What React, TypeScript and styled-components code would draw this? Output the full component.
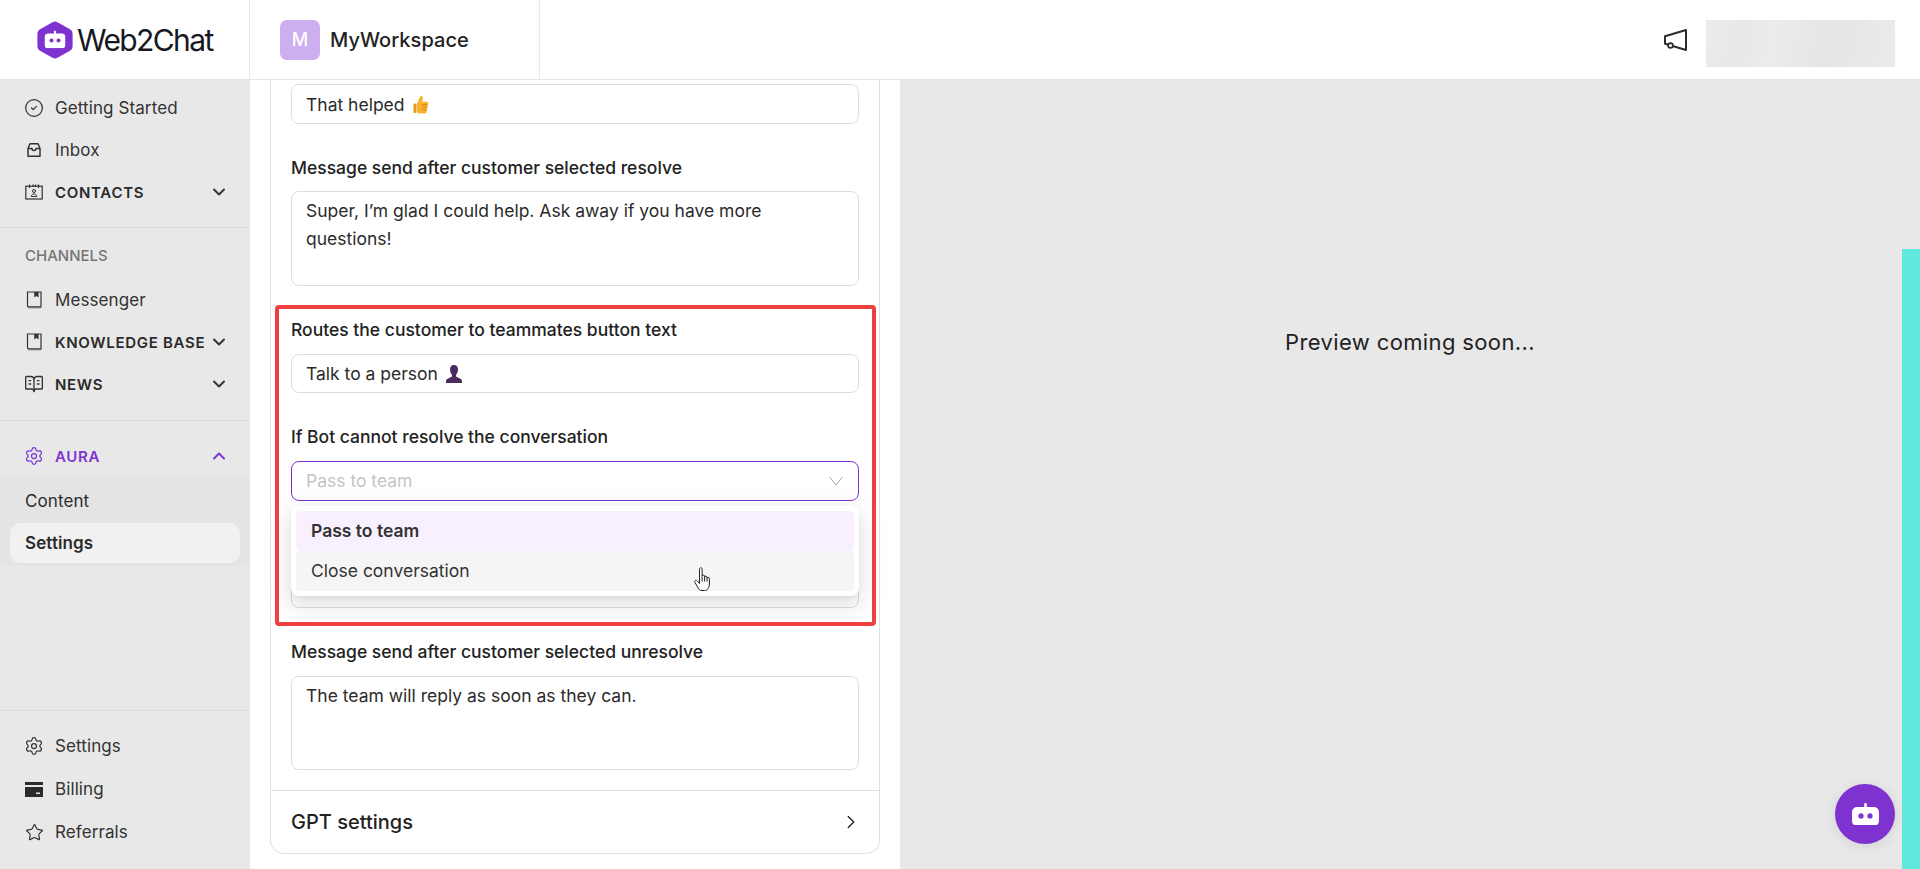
import React from "react";
import styled, { createGlobalStyle } from "styled-components";
import { ChevronDown, ChevronUp, ChevronRight, CircleCheck, Settings as Gear, Star, BookOpenText } from "lucide-react";

const Global = createGlobalStyle`
  html, body { margin: 0; padding: 0; height: 100%; overflow: hidden; }
  body { font-family: Inter, "Liberation Sans", sans-serif; color: #2b2b2b; background: #fff; }
  * { box-sizing: border-box; }
`;

const Page = styled.div`display: flex; flex-direction: column; height: 100vh; overflow: hidden;`;
const Header = styled.header`display: flex; align-items: stretch; height: 80px; flex: none; background: #fff; border-bottom: 1px solid #e6e6e6;`;
const LogoCell = styled.div`width: 250px; flex: none; display: flex; align-items: center; gap: 4px; padding-left: 37px; border-right: 1px solid #e8e8e8;`;
const LogoText = styled.span`font-size: 30px; font-weight: 400; letter-spacing: -1.6px; color: #17171f;`;
const WorkspaceCell = styled.div`width: 290px; flex: none; display: flex; align-items: center; gap: 10px; padding-left: 30px; border-right: 1px solid #e8e8e8;`;
const Avatar = styled.div`width: 40px; height: 40px; border-radius: 7px; background: #cdaeee; color: #fff; display: flex; align-items: center; justify-content: center; font-size: 18px; font-weight: 500;`;
const WorkspaceName = styled.span`font-size: 20px; font-weight: 500; letter-spacing: 0.05px; color: #222;`;
const HeaderRight = styled.div`margin-left: auto; display: flex; align-items: center; gap: 19px; padding-right: 25px;`;
const BlurredUser = styled.div`width: 189px; height: 47px; margin-top: 7px; background: linear-gradient(100deg, #ebebeb 0%, #e8e8e8 20%, #ececec 35%, #e5e5e5 65%, #ebebeb 100%);`;

const Body = styled.div`flex: 1; display: flex; min-height: 0;`;
const Sidebar = styled.nav`width: 250px; flex: none; display: flex; flex-direction: column; background: #e8e8e8;`;
const NavGroup = styled.div<{ $pad: string; $border?: boolean }>`
  padding: ${p => p.$pad};
  ${p => p.$border ? "border-bottom: 1px solid #dcdcdc;" : ""}
`;
const NavRow = styled.div<{ $active?: boolean }>`
  height: 42px; display: flex; align-items: center; padding: 0 21px 0 25px;
  font-size: 17px; letter-spacing: 0.1px; color: ${p => p.$active ? "#7e33d0" : "#333"};
`;
const NavIcon = styled.span`width: 18px; height: 18px; flex: none; margin-right: 12px; display: flex; align-items: center; justify-content: center; svg { display: block; flex: none; }`;
const NavCaps = styled.span<{ $active?: boolean }>`
  font-size: 15px; font-weight: 600; letter-spacing: 0.7px; white-space: nowrap; color: ${p => p.$active ? "#7e33d0" : "#2b2b2b"};
`;
const Chevron = styled.span`margin-left: auto; display: flex;`;
const GroupTitle = styled.div`height: 24px; margin: 0 0 11px; padding-left: 25px; line-height: 24px; font-size: 15px; font-weight: 500; color: #757575;`;
const SubMenu = styled.div`height: 88px; margin-top: 1px; padding: 3px 10px 0; background: #e4e4e4;`;
const SubItem = styled.div<{ $active?: boolean }>`
  height: 40px; margin-bottom: 2px; display: flex; align-items: center; padding-left: 15px; border-radius: 10px;
  font-size: 17px; letter-spacing: 0.1px; font-weight: ${p => p.$active ? 600 : 400};
  background: ${p => p.$active ? "#f1f1f1" : "transparent"}; color: #2b2b2b;
`;
const NavBottom = styled.div`margin-top: auto; display: flex; flex-direction: column; gap: 1px; padding: 14px 0 16px; border-top: 1px solid #dcdcdc;`;

const Main = styled.main`width: 650px; flex: none; padding: 0 20px 15px; background: #fff; overflow: hidden;`;
const Card = styled.section`width: 610px; height: 100%; display: flex; flex-direction: column; padding-top: 4px; background: #fff; border: 1px solid #e0e0e0; border-top: none; border-radius: 0 0 14px 14px;`;
const Form = styled.div`flex: 1; display: flex; flex-direction: column; gap: 32px; padding: 0 20px;`;
const Field = styled.div<{ $gap?: number }>`display: flex; flex-direction: column; gap: ${p => p.$gap ?? 12}px;`;
const Label = styled.div`height: 24px; line-height: 24px; font-size: 17.5px; font-weight: 500; color: #222;`;
const TextBox = styled.div<{ $h?: number }>`height: ${p => p.$h ?? 39}px; display: flex; align-items: center; gap: 8px; padding: 0 14px; border: 1px solid #dcdcdc; border-radius: 8px; background: #fff; font-size: 17.5px; color: #2b2b2b;`;
const TextArea = styled.div<{ $h: number }>`height: ${p => p.$h}px; padding: 5px 14px; border: 1px solid #dcdcdc; border-radius: 8px; font-size: 17.5px; line-height: 28px; color: #2b2b2b;`;
const SelectWrap = styled.div`position: relative;`;
const SelectBox = styled.div`height: 40px; display: flex; align-items: center; justify-content: space-between; padding: 0 15px 1px 14px; border: 1px solid #7e33d0; border-radius: 8px; font-size: 17.5px; color: #c4c4c4; background: #fff;`;
const Menu = styled.div`position: absolute; z-index: 2; left: 0; right: 0; top: 45px; height: 90px; padding: 5px; background: #fff; border-radius: 8px; box-shadow: 0 6px 16px rgba(0,0,0,.08), 0 3px 6px -4px rgba(0,0,0,.12), 0 9px 28px 8px rgba(0,0,0,.05);`;
const MenuItem = styled.div<{ $selected?: boolean }>`
  height: 40px; display: flex; align-items: center; padding: 0 0 1px 15px; border-radius: 4px; font-size: 17.5px; color: #333;
  font-weight: ${p => p.$selected ? 600 : 400}; background: ${p => p.$selected ? "#f9f0ff" : "#f5f5f5"};
`;
const Highlight = styled.div`position: relative; display: flex; flex-direction: column; gap: 32px;`;
const RedFrame = styled.div`position: absolute; z-index: 3; left: -16px; right: -17px; top: -13px; bottom: -18px; border: 4px solid #ef4040; border-radius: 4px; pointer-events: none;`;
const Cursor = styled.svg`position: absolute; z-index: 4; left: 403px; top: 106px;`;
const Collapse = styled.div`flex: none; height: 63px; display: flex; align-items: center; justify-content: space-between; padding: 0 17px 1px 20px; border-top: 1px solid #e0e0e0; font-size: 20px; font-weight: 500; color: #222;`;

const Preview = styled.aside`position: relative; flex: 1; background: #e8e8e8; display: flex; justify-content: center; padding-top: 247px;`;
const PreviewText = styled.div`font-size: 22px; line-height: 30px; height: 30px; color: #222; letter-spacing: 0.37px;`;
const TealBar = styled.div`position: absolute; right: 0; top: 169px; bottom: 0; width: 18px; background: #5fe8dc;`;
const ChatBubble = styled.div`position: absolute; right: 25px; bottom: 25px; width: 60px; height: 60px; border-radius: 50%; background: #7e33d0; display: flex; align-items: center; justify-content: center; box-shadow: 0 2px 12px rgba(0,0,0,.1);`;

const Bot = ({ w, dot }: { w: number; dot: string }) => (
  <svg width={w} height={w * 0.85} viewBox="0 0 27 23" fill="none">
    <rect x="12.2" y="0" width="2.6" height="6" rx="1.3" fill="#fff" />
    <rect x="0" y="4" width="27" height="19" rx="5" fill="#fff" />
    <circle cx="9" cy="13" r="2.6" fill={dot} />
    <circle cx="18" cy="13" r="2.6" fill={dot} />
  </svg>
);

const LogoMark = () => (
  <svg width="36" height="38" viewBox="0 0 36 38" fill="none">
    <path d="M15.500 1.200a5 5 0 0 1 5 0l12.500 7a5 5 0 0 1 2.600 4.400v12.800a5 5 0 0 1-2.600 4.400l-12.500 7a5 5 0 0 1-5 0L3 29.800a5 5 0 0 1-2.600-4.400V12.600A5 5 0 0 1 3 8.200z" fill="#7e33d0" />
    <g transform="translate(7.500 9.500)"><Bot w={21} dot="#7e33d0" /></g>
  </svg>
);

const InboxIcon = () => (
  <svg width="18" height="18" viewBox="0 0 18 18" fill="none" stroke="#333" strokeWidth="1.5" strokeLinejoin="round">
    <path d="M3 7.500 5 2.800h8l2 4.700v7.700H3z" /><path d="M3 7.500h4a2 2 0 0 0 4 0h4" />
  </svg>
);
const ContactsIcon = () => (
  <svg width="18" height="18" viewBox="0 0 18 18" fill="none" stroke="#333" strokeWidth="1.2">
    <rect x="0.800" y="3.200" width="16.400" height="12.800" /><path d="M4.500 1.500v3.500M13.500 1.500v3.500M8 1.500v2.500M10.500 1.500v2.500" />
    <circle cx="9" cy="8" r="1.500" strokeWidth="1" /><path d="M6.200 13.500c.3-1.700 1.400-2.600 2.800-2.600s2.500.9 2.800 2.600z" strokeWidth="1" />
  </svg>
);
const BookIcon = () => (
  <svg width="18" height="18" viewBox="0 0 18 18" fill="none" stroke="#333" strokeWidth="1.200">
    <path d="M2.500 1h13.500v14.800H3.300a.8.800 0 0 1-.8-.8z" /><path d="M3 16.800h13" strokeWidth="0.800" stroke="#666" />
    <path d="M9.500 1v5l1.900-1.200L13.300 6V1" fill="#333" strokeWidth="0.500" />
  </svg>
);
const CardIcon = () => (
  <svg width="18" height="15" viewBox="0 0 18 15">
    <path d="M0 0h18v3H0zM0 5h18v10H0z" fill="#2b2b2b" /><rect x="11" y="10.500" width="4" height="1.500" fill="#e8e8e8" />
  </svg>
);
const Megaphone = () => (
  <svg width="24" height="24" viewBox="0 0 24 24" fill="none" stroke="#2b2b2b" strokeWidth="2" strokeLinejoin="round">
    <path d="M2 8.200 23 2v20L2 15.800z" /><circle cx="7.500" cy="17.500" r="2.400" fill="#fff" strokeWidth="1.600" />
  </svg>
);
const ThumbsUp = () => (
  <svg width="16" height="19" viewBox="0 0 16 19">
    <path d="M4 8.500 7.500 1c1.600-.5 2.500.6 2.300 2L9.300 6.800h4.500c1.600 0 1.900 1.300 1.500 2.300l-1.700 7.700c-.3 1-1 1.700-2 1.700H6c-1.300 0-2-.8-2-2z" fill="#f7b32b" />
    <rect x="0.500" y="8.500" width="3" height="9.500" rx="1.200" fill="#e89a1c" />
    <path d="M9 9.500h5M9 12h4.500M9 14.500h4" stroke="#d9861a" strokeWidth="1" />
  </svg>
);
const Person = () => (
  <svg width="16" height="18" viewBox="0 0 16 18">
    <path d="M8 0c2.600 0 4 2 4 4.500S10.800 9 10 10v1.500l4.800 2.500c.8.500 1.200 1.200 1.200 2.200V18H0v-1.800c0-1 .4-1.700 1.200-2.200L6 11.500V10C5.200 9 4 7 4 4.500S5.400 0 8 0z" fill="#4b2a5e" />
  </svg>
);
const SelectChevron = () => (
  <svg width="14" height="10" viewBox="0 0 14 10" fill="none" stroke="#a8a8a8" strokeWidth="1">
    <path d="M.500 .800 7 9.200 13.500 .800" />
  </svg>
);
const HandCursor = () => (
  <Cursor width="18" height="25" viewBox="0 0 18 25" fill="#fff" stroke="#222" strokeWidth="1">
    <path d="M5.500 2.200c0-2 2.600-2 2.600 0v7c.1-1.500 2.500-1.500 2.500 0v1c.1-1.400 2.400-1.400 2.400.1v1c.2-1.300 2.400-1.200 2.400.3v5.400c0 3-1.700 6.500-4.700 6.500H8c-2.100 0-3.100-1.100-4-2.700L1 15.500c-1-1.700 1.100-3 2.300-1.500l2.200 2.500z" />
    <path d="M8.100 9.500v5M10.600 10v4.500M13 11v3.500" />
  </Cursor>
);

type Item = { icon: React.ReactNode; text: string };

const Plain = ({ icon, text }: Item) => (
  <NavRow><NavIcon>{icon}</NavIcon>{text}</NavRow>
);
const Section = ({ icon, text, open }: Item & { open?: boolean }) => (
  <NavRow $active={open}>
    <NavIcon>{icon}</NavIcon>
    <NavCaps $active={open}>{text}</NavCaps>
    <Chevron>{open ? <ChevronUp size={20} strokeWidth={2.4} /> : <ChevronDown size={20} strokeWidth={2.4} />}</Chevron>
  </NavRow>
);

export default function App() {
  return (
    <Page>
      <Global />
      <Header>
        <LogoCell><LogoMark /><LogoText>Web2Chat</LogoText></LogoCell>
        <WorkspaceCell><Avatar>M</Avatar><WorkspaceName>MyWorkspace</WorkspaceName></WorkspaceCell>
        <HeaderRight><Megaphone /><BlurredUser /></HeaderRight>
      </Header>
      <Body>
        <Sidebar>
          <NavGroup $pad="7px 0 14px" $border>
            <Plain icon={<CircleCheck size={20} strokeWidth={1.5} />} text="Getting Started" />
            <Plain icon={<InboxIcon />} text="Inbox" />
            <Section icon={<ContactsIcon />} text="CONTACTS" />
          </NavGroup>
          <NavGroup $pad="16px 0 15px" $border>
            <GroupTitle>CHANNELS</GroupTitle>
            <Plain icon={<BookIcon />} text="Messenger" />
            <Section icon={<BookIcon />} text="KNOWLEDGE BASE" />
            <Section icon={<BookOpenText size={20} strokeWidth={1.6} />} text="NEWS" />
          </NavGroup>
          <NavGroup $pad="14px 0 0">
            <Section icon={<Gear size={20} strokeWidth={1.5} />} text="AURA" open />
            <SubMenu>
              <SubItem>Content</SubItem>
              <SubItem $active>Settings</SubItem>
            </SubMenu>
          </NavGroup>
          <NavBottom>
            <Plain icon={<Gear size={20} strokeWidth={1.5} />} text="Settings" />
            <Plain icon={<CardIcon />} text="Billing" />
            <Plain icon={<Star size={19} strokeWidth={1.5} />} text="Referrals" />
          </NavBottom>
        </Sidebar>
        <Main>
          <Card>
            <Form>
              <TextBox $h={40}>That helped <ThumbsUp /></TextBox>
              <Field $gap={11}>
                <Label>Message send after customer selected resolve</Label>
                <TextArea $h={95}>Super, I’m glad I could help. Ask away if you have more questions!</TextArea>
              </Field>
              <Highlight>
                <RedFrame />
                <Field>
                  <Label>Routes the customer to teammates button text</Label>
                  <TextBox>Talk to a person <Person /></TextBox>
                </Field>
                <Field>
                  <Label>If Bot cannot resolve the conversation</Label>
                  <SelectWrap>
                    <SelectBox>
                      Pass to team
                      <SelectChevron />
                    </SelectBox>
                    <Menu>
                      <MenuItem $selected>Pass to team</MenuItem>
                      <MenuItem>Close conversation</MenuItem>
                    </Menu>
                    <HandCursor />
                  </SelectWrap>
                </Field>
                <Field>
                  <Label />
                  <TextBox />
                </Field>
              </Highlight>
              <Field>
                <Label>Message send after customer selected unresolve</Label>
                <TextArea $h={94}>The team will reply as soon as they can.</TextArea>
              </Field>
            </Form>
            <Collapse>GPT settings<ChevronRight size={22} strokeWidth={1.5} /></Collapse>
          </Card>
        </Main>
        <Preview>
          <PreviewText>Preview coming soon...</PreviewText>
          <TealBar />
          <ChatBubble><Bot w={27} dot="#7e33d0" /></ChatBubble>
        </Preview>
      </Body>
    </Page>
  );
}
